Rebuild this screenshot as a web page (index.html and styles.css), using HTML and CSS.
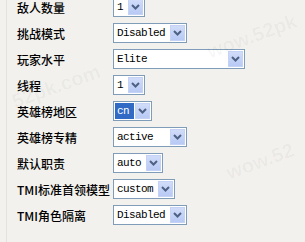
FILE: index.html
```html
<!DOCTYPE html>
<html lang="zh-cn">
<head>
    <meta charset="UTF-8">
    <title>设置</title>
    <link rel="stylesheet" href="styles.css">
</head>
<body>
    <div class="panel">
        <div class="row">
            <span class="label">敌人数量</span>
            <div class="select w32"><span class="value">1</span><span class="arrow"><svg width="9" height="6" viewBox="0 0 9 6"><path d="M1 1l3.5 3.5L8 1" fill="none" stroke="#4d6185" stroke-width="2"/></svg></span></div>
        </div>
        <div class="row">
            <span class="label">挑战模式</span>
            <div class="select w74"><span class="value">Disabled</span><span class="arrow"><svg width="9" height="6" viewBox="0 0 9 6"><path d="M1 1l3.5 3.5L8 1" fill="none" stroke="#4d6185" stroke-width="2"/></svg></span></div>
        </div>
        <div class="row">
            <span class="label">玩家水平</span>
            <div class="select w132"><span class="value">Elite</span><span class="arrow"><svg width="9" height="6" viewBox="0 0 9 6"><path d="M1 1l3.5 3.5L8 1" fill="none" stroke="#4d6185" stroke-width="2"/></svg></span></div>
        </div>
        <div class="row">
            <span class="label">线程</span>
            <div class="select w32"><span class="value">1</span><span class="arrow"><svg width="9" height="6" viewBox="0 0 9 6"><path d="M1 1l3.5 3.5L8 1" fill="none" stroke="#4d6185" stroke-width="2"/></svg></span></div>
        </div>
        <div class="row">
            <span class="label">英雄榜地区</span>
            <div class="select w39 focused"><span class="value">cn</span><span class="arrow"><svg width="9" height="6" viewBox="0 0 9 6"><path d="M1 1l3.5 3.5L8 1" fill="none" stroke="#4d6185" stroke-width="2"/></svg></span></div>
        </div>
        <div class="row">
            <span class="label">英雄榜专精</span>
            <div class="select w74"><span class="value">active</span><span class="arrow"><svg width="9" height="6" viewBox="0 0 9 6"><path d="M1 1l3.5 3.5L8 1" fill="none" stroke="#4d6185" stroke-width="2"/></svg></span></div>
        </div>
        <div class="row">
            <span class="label">默认职责</span>
            <div class="select w50"><span class="value">auto</span><span class="arrow"><svg width="9" height="6" viewBox="0 0 9 6"><path d="M1 1l3.5 3.5L8 1" fill="none" stroke="#4d6185" stroke-width="2"/></svg></span></div>
        </div>
        <div class="row">
            <span class="label">TMI标准首领模型</span>
            <div class="select w62"><span class="value">custom</span><span class="arrow"><svg width="9" height="6" viewBox="0 0 9 6"><path d="M1 1l3.5 3.5L8 1" fill="none" stroke="#4d6185" stroke-width="2"/></svg></span></div>
        </div>
        <div class="row">
            <span class="label">TMI角色隔离</span>
            <div class="select w74"><span class="value">Disabled</span><span class="arrow"><svg width="9" height="6" viewBox="0 0 9 6"><path d="M1 1l3.5 3.5L8 1" fill="none" stroke="#4d6185" stroke-width="2"/></svg></span></div>
        </div>
    </div>

    <span class="mark m1">wow.52pk</span>
    <span class="mark m2">52pk.com</span>
    <span class="mark m3">wow.52</span>
</body>
</html>
```

FILE: styles.css
```css
body {
    margin: 0;
    height: 242px;
    overflow: hidden;
    background-color: #f2f1ed;
    font-family: "Noto Sans CJK SC", "Liberation Sans", sans-serif;
    position: relative;
}

.panel {
    margin-left: 6px;
    margin-top: -6px;
    padding-left: 10px;
    border-left: 1px solid #e3e2dd;
    height: 248px;
}

.row {
    display: flex;
    align-items: center;
    height: 26px;
}

.label {
    flex: 0 0 96px;
    font-size: 12px;
    font-weight: 500;
    color: #000;
    line-height: 13px;
    white-space: nowrap;
}

.select {
    display: flex;
    align-items: center;
    height: 18px;
    border: 1px solid #7f9db9;
    background-color: #fff;
}

.value {
    flex: 1;
    margin: 0 0 0 1px;
    padding-left: 2px;
    height: 16px;
    line-height: 16px;
    font-family: "Liberation Mono", monospace;
    font-size: 11px;
    letter-spacing: -0.6px;
    color: #000;
}

.focused .value {
    background-color: #316ac5;
    color: #fff;
}

.arrow {
    width: 15px;
    height: 16px;
    margin: 0 1px;
    display: flex;
    align-items: center;
    justify-content: center;
    background: linear-gradient(#d2ddf9, #b6c8f4);
    box-shadow: inset 0 0 0 1px #c3d2f5;
}

.w32 { width: 30px; }
.w39 { width: 37px; }
.w50 { width: 48px; }
.w62 { width: 60px; }
.w74 { width: 72px; }
.w132 { width: 130px; }

/* watermark */
.mark {
    position: absolute;
    font-family: "Liberation Sans", sans-serif;
    font-weight: bold;
    font-size: 20px;
    color: rgba(0, 0, 0, 0.035);
    transform: rotate(-20deg);
    white-space: nowrap;
}

.m1 { left: 205px; top: 25px; }
.m2 { left: 10px; top: 75px; }
.m3 { left: 225px; top: 150px; }
```
